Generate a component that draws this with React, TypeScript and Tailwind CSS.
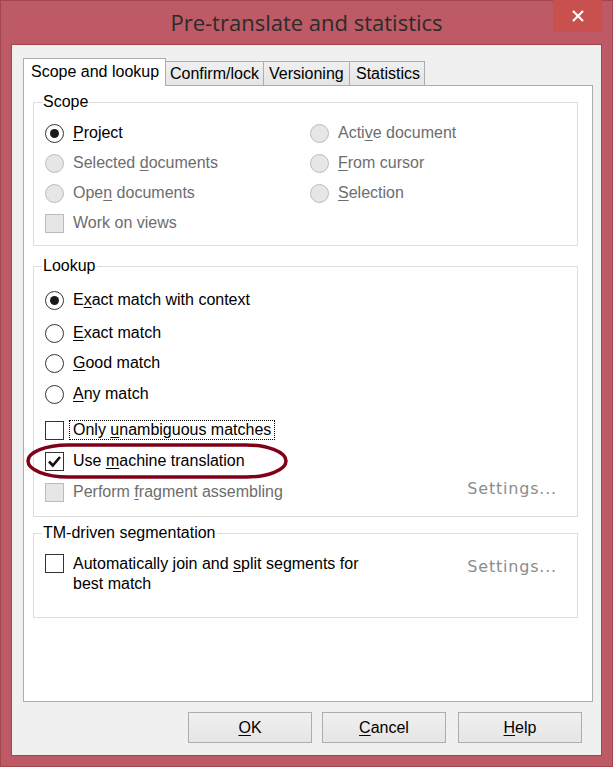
import React from 'react';

const font = { fontFamily: '"Liberation Sans", Arial, sans-serif' };

function U({ children }: { children: React.ReactNode }) {
  return <span className="underline underline-offset-[2px] decoration-1">{children}</span>;
}

function Radio({ checked, disabled }: { checked?: boolean; disabled?: boolean }) {
  return (
    <span
      className={
        'flex h-[19px] w-[19px] shrink-0 items-center justify-center rounded-full border ' +
        (disabled ? 'border-[#bcbcbc] bg-[#e6e6e6]' : 'border-[#333] bg-white')
      }
    >
      {checked && <span className="h-[9px] w-[9px] rounded-full bg-[#1a1a1a]" />}
    </span>
  );
}

function Check({ checked, disabled }: { checked?: boolean; disabled?: boolean }) {
  return (
    <span
      className={
        'flex h-[19px] w-[19px] shrink-0 items-center justify-center border ' +
        (disabled ? 'border-[#bcbcbc] bg-[#e6e6e6]' : 'border-[#333] bg-white')
      }
    >
      {checked && (
        <svg width="15" height="15" viewBox="0 0 15 15">
          <path d="M2 7.5 L5.8 11.5 L13 3" fill="none" stroke="#111" strokeWidth="2.6" />
        </svg>
      )}
    </span>
  );
}

function Option({
  kind,
  checked,
  disabled,
  children,
  className = '',
}: {
  kind: 'radio' | 'check';
  checked?: boolean;
  disabled?: boolean;
  children: React.ReactNode;
  className?: string;
}) {
  return (
    <div className={'flex h-[30px] items-center ' + className}>
      {kind === 'radio' ? <Radio checked={checked} disabled={disabled} /> : <Check checked={checked} disabled={disabled} />}
      <span className={'ml-[9px] whitespace-nowrap ' + (disabled ? 'text-[#6d6d6d]' : 'text-black')}>{children}</span>
    </div>
  );
}

function Group({ title, children, className = '' }: { title: string; children: React.ReactNode; className?: string }) {
  return (
    <fieldset className={'border border-[#dcdcdc] pl-[11px] pr-[20px] ' + className}>
      <legend className="ml-[-3px] px-[1px] text-[16px] leading-[18px] text-black">{title}</legend>
      {children}
    </fieldset>
  );
}

function Settings() {
  return (
    <span
      className="text-[16px] tracking-[0.8px] text-[#8c8c8c]"
      style={{ fontFamily: '"DejaVu Sans", Verdana, sans-serif' }}
    >
      Settings...
    </span>
  );
}

function Btn({ children }: { children: React.ReactNode }) {
  return (
    <button className="flex h-[31px] w-[124px] items-center justify-center border border-[#adadad] bg-gradient-to-b from-[#f0f0f0] to-[#e5e5e5] text-[16px] text-black">
      {children}
    </button>
  );
}

export default function App() {
  return (
    <div className="relative h-[767px] w-[613px] border border-[#a3454f] bg-[#bd5a65] text-[16px]" style={font}>
      {/* title bar */}
      <div className="relative flex h-[43px] items-center justify-center">
        <span
          className="text-[22px] text-[#2b2b2b]"
          style={{ fontFamily: '"Open Sans", "Noto Sans", sans-serif' }}
        >
          Pre-translate and statistics
        </span>
        <div className="absolute right-[10px] top-[-1px] flex h-[32px] w-[49px] items-center justify-center bg-[#c8504f]">
          <svg width="14" height="14" viewBox="0 0 14 14">
            <path d="M2 2 L12 12 M12 2 L2 12" stroke="#fff" strokeWidth="2.2" />
          </svg>
        </div>
      </div>

      {/* client area */}
      <div className="mx-[10px] flex h-[712px] flex-col border border-[#a3454f] bg-[#f0f0f0] pl-[11px] pr-[8px]">
        {/* tabs */}
        <div className="mt-[12px] flex h-[28px] items-end">
          <div className="relative z-10 -mb-px flex h-[28px] w-[143px] items-center border border-b-0 border-[#adadad] bg-white pl-[7px] pb-[2px]">
            Scope and lookup
          </div>
          <div className="flex h-[24px] w-[98px] items-center border border-l-0 border-b-0 border-[#adadad] bg-gradient-to-b from-[#f0f0f0] to-[#e5e5e5] pl-[4px]">
            Confirm/lock
          </div>
          <div className="flex h-[24px] w-[86px] items-center border border-l-0 border-b-0 border-[#adadad] bg-gradient-to-b from-[#f0f0f0] to-[#e5e5e5] pl-[5px]">
            Versioning
          </div>
          <div className="flex h-[24px] w-[75px] items-center border border-l-0 border-b-0 border-[#adadad] bg-gradient-to-b from-[#f0f0f0] to-[#e5e5e5] pl-[6px]">
            Statistics
          </div>
        </div>

        {/* tab panel */}
        <div className="relative h-[617px] w-[570px] border border-[#adadad] bg-white pl-[9px] pr-[14px] pt-[7px]">
          <Group title="Scope" className="pb-[7px]">
            <div className="mt-[7px] grid grid-cols-[265px_1fr]">
              <div>
                <Option kind="radio" checked>
                  <U>P</U>roject
                </Option>
                <Option kind="radio" disabled>
                  Selected <U>d</U>ocuments
                </Option>
                <Option kind="radio" disabled>
                  Ope<U>n</U> documents
                </Option>
                <Option kind="check" disabled className="h-[29px]">
                  Work on views
                </Option>
              </div>
              <div>
                <Option kind="radio" disabled>
                  Acti<U>v</U>e document
                </Option>
                <Option kind="radio" disabled>
                  <U>F</U>rom cursor
                </Option>
                <Option kind="radio" disabled>
                  <U>S</U>election
                </Option>
              </div>
            </div>
          </Group>

          <Group title="Lookup" className="mt-[11px] pb-[9px]">
            <div className="mt-[10px]">
              <Option kind="radio" checked>
                E<U>x</U>act match with context
              </Option>
              <Option kind="radio" className="mt-[3px]">
                <U>E</U>xact match
              </Option>
              <Option kind="radio">
                <U>G</U>ood match
              </Option>
              <Option kind="radio" className="mt-[1px]">
                <U>A</U>ny match
              </Option>
              <div className="mt-[6px] flex h-[30px] items-center">
                <Check />
                <span className="ml-[5px] border border-dotted border-black px-[3px] leading-[18px]">
                  Only <U>u</U>nambiguous matches
                </span>
              </div>
              <Option kind="check" checked className="mt-[1px]">
                Use <U>m</U>achine translation
              </Option>
              <div className="mt-[1px] flex h-[30px] items-center justify-between">
                <div className="flex items-center">
                  <Check disabled />
                  <span className="ml-[9px] text-[#6d6d6d]">
                    Perform <U>f</U>ragment assembling
                  </span>
                </div>
                <span className="mt-[-7px]">
                  <Settings />
                </span>
              </div>
            </div>
          </Group>

          <Group title="TM-driven segmentation" className="mt-[7px] pb-[23px]">
            <div className="mt-[12px] flex items-start justify-between">
              <div className="flex items-start">
                <Check />
                <span className="ml-[9px] w-[290px] leading-[20px] text-black">
                  Automatically join and <U>s</U>plit segments for best match
                </span>
              </div>
              <span className="mt-[1px]">
                <Settings />
              </span>
            </div>
          </Group>

          {/* annotation around "Use machine translation" */}
          <svg className="pointer-events-none absolute left-[2px] top-[357px]" width="264" height="38" viewBox="0 0 264 38">
            <rect x="2" y="2" width="258" height="32" rx="40" ry="16" fill="none" stroke="#80001a" strokeWidth="3.5" />
          </svg>
        </div>

        {/* buttons */}
        <div className="mt-[10px] flex justify-end gap-[10px] pr-[11px]">
          <Btn>
            <U>O</U>K
          </Btn>
          <Btn>
            <U>C</U>ancel
          </Btn>
          <div className="ml-[2px]">
            <Btn>
              <U>H</U>elp
            </Btn>
          </div>
        </div>
      </div>
    </div>
  );
}
